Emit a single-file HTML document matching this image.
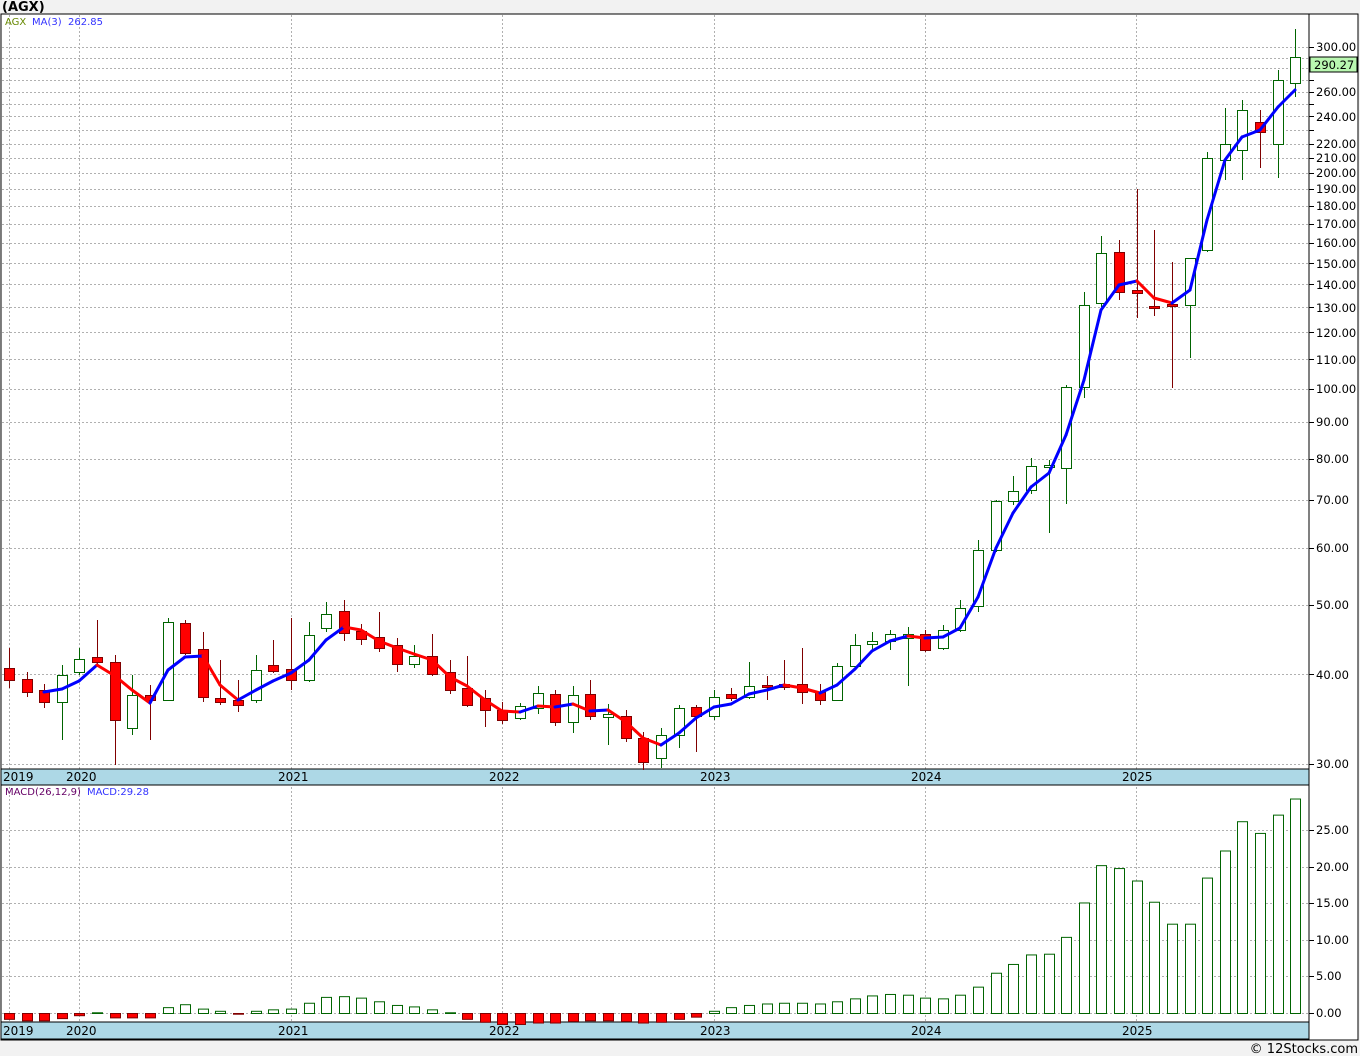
<!DOCTYPE html>
<html><head><meta charset="utf-8"><style>
html,body{margin:0;padding:0;background:#f2f2f2;width:1360px;height:1056px;overflow:hidden;font-family:"DejaVu Sans","Liberation Sans",sans-serif}
svg{display:block}
text{font-family:"DejaVu Sans","Liberation Sans",sans-serif}
</style></head><body>
<svg id="s" width="1360" height="1056" xmlns="http://www.w3.org/2000/svg">
<rect x="0" y="0" width="1360" height="1056" fill="#f2f2f2"/>
<text x="2" y="11" font-size="13" font-weight="bold" fill="#000">(AGX)</text>
<rect x="1" y="14" width="1357" height="1026" fill="#fff" stroke="#000" stroke-width="1"/>
<g id="grid"></g>
<rect x="1" y="769" width="1308" height="16" fill="#add8e6" stroke="#000"/>
<rect x="1" y="1022" width="1308" height="17" fill="#add8e6" stroke="#000"/>
<line x1="1309" y1="14" x2="1309" y2="1040" stroke="#000"/>
<g id="macd"></g>
<g id="candles"></g>
<g id="ma"></g>
<g font-size="12" fill="#000">
<text x="3" y="781">2019</text><text x="66" y="781">2020</text><text x="278" y="781">2021</text><text x="489" y="781">2022</text><text x="700" y="781">2023</text><text x="911" y="781">2024</text><text x="1122" y="781">2025</text>
<text x="3" y="1035">2019</text><text x="66" y="1035">2020</text><text x="278" y="1035">2021</text><text x="489" y="1035">2022</text><text x="700" y="1035">2023</text><text x="911" y="1035">2024</text><text x="1122" y="1035">2025</text>
</g>
<text x="5" y="25" font-size="10" fill="#668800">AGX</text>
<text x="32" y="25" font-size="10" fill="#3333ff">MA(3)</text>
<text x="68" y="25" font-size="10" fill="#3333ff">262.85</text>
<text x="5" y="795" font-size="10" fill="#660066">MACD(26,12,9)</text>
<text x="87" y="795" font-size="10" fill="#3333ff">MACD:29.28</text>
<rect x="1310" y="57" width="47" height="15" fill="#b9f7b0" stroke="#000"/>
<text x="1314" y="69" font-size="11.5" fill="#000">290.27</text>
<text x="1358" y="1053" font-size="13" fill="#000" text-anchor="end">© 12Stocks.com</text>
<g font-size="11.5" fill="#000">
<text x="1316" y="51">300.00</text><text x="1316" y="96">260.00</text><text x="1316" y="121">240.00</text><text x="1316" y="148">220.00</text><text x="1316" y="162">210.00</text><text x="1316" y="177">200.00</text><text x="1316" y="193">190.00</text><text x="1316" y="210">180.00</text><text x="1316" y="228">170.00</text><text x="1316" y="247">160.00</text><text x="1316" y="268">150.00</text><text x="1316" y="289">140.00</text><text x="1316" y="312">130.00</text><text x="1316" y="337">120.00</text><text x="1316" y="364">110.00</text><text x="1316" y="393">100.00</text><text x="1316" y="426">90.00</text><text x="1316" y="463">80.00</text><text x="1316" y="504">70.00</text><text x="1316" y="552">60.00</text><text x="1316" y="609">50.00</text><text x="1316" y="679">40.00</text><text x="1316" y="768">30.00</text>
<text x="1316" y="834">25.00</text><text x="1316" y="871">20.00</text><text x="1316" y="907">15.00</text><text x="1316" y="944">10.00</text><text x="1316" y="980">5.00</text><text x="1316" y="1017">0.00</text>
</g>
</svg>
<script>
var NS="http://www.w3.org/2000/svg";
function el(p,t,a){var e=document.createElementNS(NS,t);for(var k in a)e.setAttribute(k,a[k]);document.getElementById(p).appendChild(e);return e;}
function Y(p){return 764-(Math.log10(p)-Math.log10(30))*717;}
var dash={stroke:"#b0b0b0","stroke-dasharray":"2,2","stroke-width":1};
for(var v=30;v<=300;v+=10){var y=Math.round(Y(v))+.5;el("grid","line",Object.assign({x1:2,x2:1309,y1:y,y2:y},dash));el("grid","line",{x1:1309,x2:1314,y1:y,y2:y,stroke:"#000"});}
for(var u=0;u<=25;u+=5){var y=Math.round(1013-u*7.32)+.5;el("grid","line",Object.assign({x1:2,x2:1309,y1:y,y2:y},dash));el("grid","line",{x1:1309,x2:1314,y1:y,y2:y,stroke:"#000"});}
[9,79,291,502,714,925,1136].forEach(function(x){x+=.5;el("grid","line",Object.assign({x1:x,x2:x,y1:15,y2:1022},dash));});
var C=[[668,680,648,688,0],[679,692,672,697,0],[690,702,684,708,0],[675,702,665,740,1],[659,672,648,675,1],[657,662,620,665,0],[662,720,655,765,0],[695,728,675,735,1],[695,700,685,740,0],[622,700,618,700,1],[623,653,620,655,0],[649,697,632,702,0],[698,702,660,705,0],[700,705,680,712,0],[670,700,655,703,1],[665,671,640,673,0],[669,680,618,690,0],[635,680,622,682,1],[614,628,602,632,1],[611,633,600,641,0],[631,639,624,645,0],[637,648,612,652,0],[645,664,638,672,0],[656,664,645,668,1],[656,674,634,676,0],[672,690,660,694,0],[688,705,656,707,0],[698,710,690,727,0],[710,720,702,724,0],[706,718,703,720,1],[693,708,686,714,1],[694,722,690,726,0],[695,722,686,733,1],[694,716,680,720,0],[714,717,704,745,1],[716,738,710,742,0],[738,762,732,770,0],[735,758,728,768,1],[708,735,705,748,1],[707,716,705,752,0],[697,716,690,720,1],[694,698,688,701,0],[686,697,662,699,1],[685,687,676,700,0],[684,687,660,690,0],[684,692,648,704,0],[692,700,684,705,0],[666,700,663,701,1],[645,666,634,669,1],[641,644,632,650,1],[634,641,630,650,1],[634,638,627,686,1],[634,650,630,652,0],[630,648,625,650,1],[608,630,600,632,1],[550,606,540,612,1],[501,550,500,552,1],[491,501,476,505,1],[466,490,458,494,1],[465,467,460,533,1],[387,468,385,504,1],[305,387,292,398,1],[253,303,236,307,1],[252,292,240,300,0],[290,293,189,318,0],[306,308,230,316,0],[304,306,262,388,0],[258,305,258,358,1],[158,250,152,252,1],[144,160,108,180,1],[110,150,100,180,1],[122,132,110,168,0],[80,144,70,178,1],[57,83,29,97,1]];
function X(i){return Math.round(9+17.62*i);}
C.forEach(function(c,i){var x=X(i)+.5;var g=c[4],col=g?"#006400":"#800000";
el("candles","line",{x1:x,x2:x,y1:c[2],y2:c[3],stroke:col});
el("candles","rect",{x:x-5,y:c[0]+.5,width:10,height:Math.max(1,c[1]-c[0]),fill:g?"#fff":"#ff0000",stroke:col});});
var M=[[44,692],[62,689],[79,681],[97,665],[115,676],[132,690],[150,703],[167,670],[185,657],[203,656],[220,685],[238,700],[256,690],[273,681],[291,673],[309,660],[326,640],[344,627],[362,630],[379,641],[397,648],[415,654],[432,660],[450,677],[467,686],[485,700],[503,711],[520,712],[538,706],[556,707],[573,704],[591,711],[609,710],[626,722],[644,738],[661,745],[679,733],[697,718],[714,707],[732,704],[750,694],[767,690],[785,685],[802,688],[820,693],[838,685],[855,669],[873,651],[891,641],[908,636],[926,638],[943,637],[961,628],[979,597],[996,548],[1014,513],[1032,487],[1049,473],[1067,435],[1085,380],[1102,310],[1120,285],[1137,281],[1155,298],[1173,303],[1190,290],[1208,220],[1226,160],[1243,137],[1261,130],[1278,107],[1296,90]];
M.forEach(function(p,i){p[0]=X(i+2);});
for(var i=1;i<M.length;i++){el("ma","line",{x1:M[i-1][0],y1:M[i-1][1],x2:M[i][0],y2:M[i][1],stroke:M[i][1]>M[i-1][1]?"#ff0000":"#0000ff","stroke-width":3,"stroke-linecap":"round"});}
var D=[-.8,-1,-1,-.7,-.3,.1,-.6,-.6,-.6,.8,1.2,.6,.3,-.1,.3,.5,.6,1.4,2.2,2.3,2.1,1.6,1.1,.9,.5,.1,-.8,-1.2,-1.5,-1.5,-1.3,-1.3,-1.1,-1,-1,-1.1,-1.3,-1.2,-.8,-.5,.3,.8,1.1,1.3,1.4,1.4,1.3,1.6,2,2.4,2.6,2.5,2.1,2,2.5,3.6,5.5,6.7,8,8.1,10.4,15.1,20.2,19.8,18.1,15.2,12.2,12.2,18.5,22.2,26.2,24.6,27.1,29.3];
D.forEach(function(v,i){var x=X(i)-5+.5;var h=Math.abs(v)*7.32;
if(v>=0)el("macd","rect",{x:x,y:1013.5-h,width:10,height:Math.max(h,.5),fill:"#fff",stroke:"#006400"});
else el("macd","rect",{x:x,y:1013.5,width:10,height:h,fill:"#ff0000",stroke:"#800000"});});
</script>
</body></html>
